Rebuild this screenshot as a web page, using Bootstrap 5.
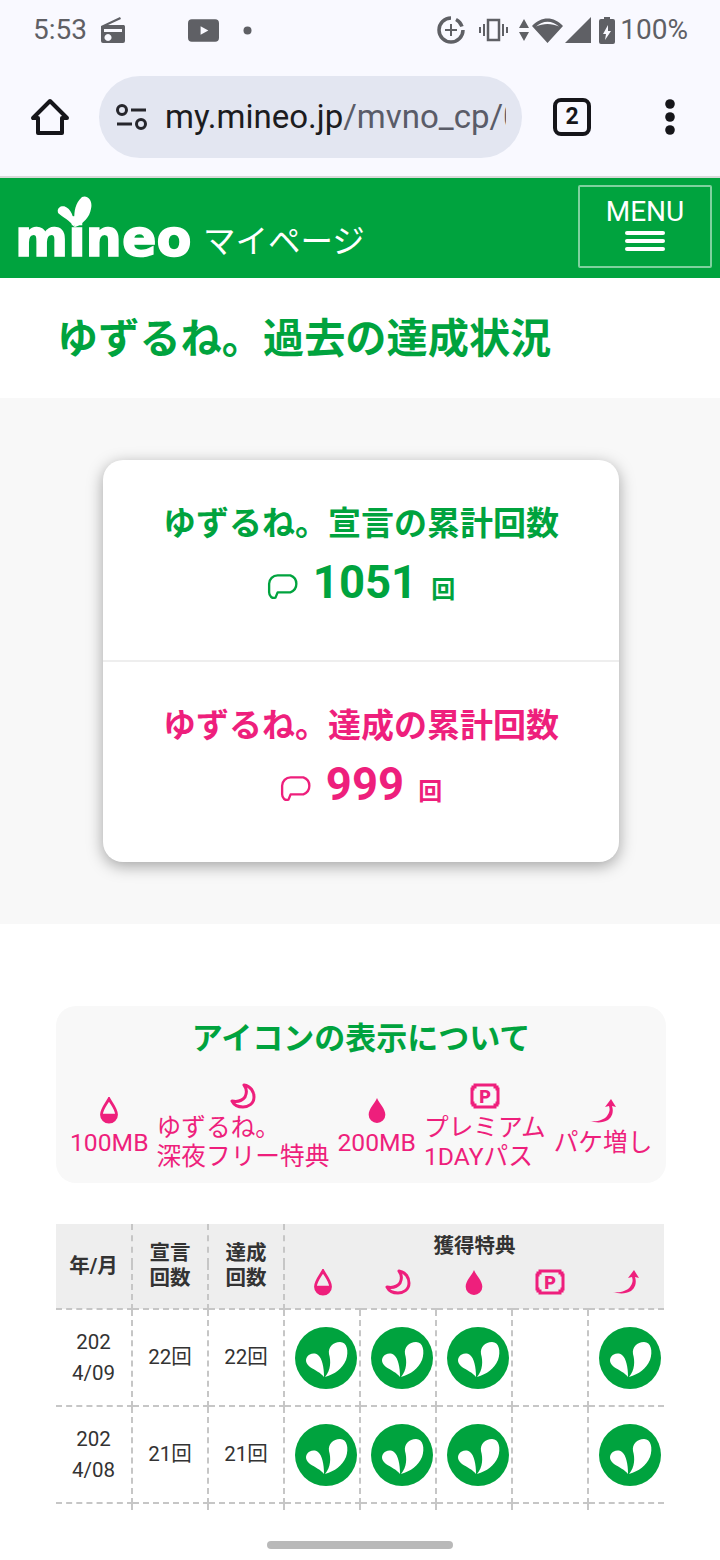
<!DOCTYPE html>
<html lang="ja">
<head>
    <meta charset="UTF-8">
    <meta name="viewport" content="width=device-width, initial-scale=1.0">
    <title>ゆずるね。過去の達成状況</title>
    <link href="https://cdn.jsdelivr.net/npm/bootstrap@5.3.2/dist/css/bootstrap.min.css" rel="stylesheet">
    <style>
        body {
            font-family: Roboto, "Noto Sans CJK JP", sans-serif;
            background-color: #fff;
            color: #333;
            overflow: hidden;
            height: 1560px;
        }

        /* phone chrome */
        .status-bar {
            height: 58px;
            background-color: #f9f9ff;
            color: #5f6065;
            font-size: 28px;
            padding: 2px 32px 0 33px;
        }

        .status-bar svg { display: block; fill: #5f6065; }

        .gap-2px { margin-left: 2px; }
        .gap-5px { margin-left: 5px; }
        .gap-8px { margin-left: 8px; }
        .gap-10px { margin-left: 10px; }
        .gap-13px { margin-left: 13px; }
        .gap-14px { margin-left: 14px; }
        .gap-24px { margin-left: 24px; }
        .gap-62px { margin-left: 62px; }
        .gap-73px { margin-left: 73px; }

        .browser-bar {
            height: 120px;
            background-color: #f9f9ff;
            border-bottom: 2px solid #d9d9d9;
            padding-left: 30px;
        }

        .url-pill {
            width: 423px;
            height: 82px;
            margin: 0 0 0 29px;
            background-color: #e3e6f1;
            border-radius: 41px;
            padding-left: 17px;
        }

        .url-text {
            width: 341px;
            margin-left: 17px;
            overflow: hidden;
            white-space: nowrap;
            font-size: 33px;
            line-height: 44px;
            color: #5a5c68;
        }

        .url-text b { font-weight: 400; color: #1c1c20; }

        .tab-count {
            width: 38px;
            height: 38px;
            margin-left: 31px;
            border: 4px solid #16161a;
            border-radius: 8px;
            font-size: 23px;
            font-weight: 700;
            line-height: 30px;
            text-align: center;
            color: #16161a;
        }

        /* site header */
        .site-head {
            height: 100px;
            background-color: #00a33e;
            padding: 0 8px 0 17px;
        }

        .logo-wrap { position: relative; width: 174px; height: 100px; }

        .logo-word {
            position: absolute;
            left: -2px;
            top: 31px;
            font-family: "DejaVu Sans", sans-serif;
            font-weight: 700;
            font-size: 51px;
            line-height: 60px;
            color: #fff;
            -webkit-text-stroke: 1.5px #fff;
        }

        .logo-leaf { position: absolute; left: 40px; top: 18px; }

        .logo-sub {
            margin: 27px 0 0 12px;
            font-size: 32.5px;
            font-weight: 400;
            color: #fff;
            line-height: 40px;
        }

        .menu-box {
            width: 134px;
            height: 83px;
            margin-bottom: 4px;
            border: 2px solid #7fd19e;
            border-radius: 2px;
            color: #fff;
            font-size: 28px;
            line-height: 32px;
            padding-top: 9px;
            text-align: center;
        }

        .menu-lines { width: 40px; height: 4px; margin: 3px auto 0; background: #fff; border-radius: 2px; }
        .menu-lines + .menu-lines { margin-top: 4px; }

        /* title */
        .page-title {
            height: 120px;
            margin: 0;
            padding-left: 57px;
            font-size: 41.2px;
            font-weight: 700;
            line-height: 122px;
            color: #00a33e;
        }

        .stats-band {
            height: 526px;
            padding: 62px 101px 0 103px;
            background-color: #f8f8f8;
        }

        .stats-box {
            height: 402px;
            background-color: #fff;
            border-radius: 20px;
            box-shadow: 0 4px 16px rgba(0, 0, 0, .35);
        }

        .stats-part { height: 200px; padding-top: 42px; text-align: center; }
        .stats-part + .stats-part { border-top: 2px solid #eee; padding-top: 42px; }

        .stats-label { font-size: 33px; font-weight: 700; line-height: 44px; }

        .stats-count {
            margin-top: 7px;
            font-size: 45.5px;
            font-weight: 700;
            line-height: 60px;
        }

        .stats-count svg { margin-right: 12px; vertical-align: -3px; }
        .stats-count small { margin-left: 14px; font-size: 24px; font-weight: 700; }

        .tone-green { color: #00a33e; }
        .tone-pink { color: #ee1f7c; }

        /* legend */
        .legend-box {
            width: 610px;
            height: 177px;
            margin: 82px 0 0 56px;
            padding-top: 12px;
            background-color: #f8f8f8;
            border-radius: 20px;
        }

        .legend-title {
            margin: 0;
            font-size: 31px;
            font-weight: 700;
            line-height: 42px;
            text-align: center;
            color: #00a33e;
        }

        .legend-items {
            gap: 8px;
            padding-left: 14px;
            height: 110px;
            margin-top: 12px;
            font-size: 24.7px;
            line-height: 29px;
            color: #ee1f7c;
            white-space: nowrap;
        }

        .legend-items svg { display: block; margin: 0 auto 4px; }

        /* table */
        .bonus-table {
            width: 608px;
            margin: 41px 0 0 56px;
            table-layout: fixed;
            border-collapse: collapse;
            font-size: 20.5px;
            color: #333;
            text-align: center;
        }

        .bonus-table col { width: 76px; }

        .bonus-table th, .bonus-table td {
            padding: 0;
            vertical-align: middle;
            border: 2px dashed #c6c6c6;
            border-top: 0;
        }

        .bonus-table tr > :first-child { border-left: 0; }
        .bonus-table tr > :last-child { border-right: 0; }

        .bonus-table th {
            background-color: #eee;
            font-weight: 700;
            line-height: 25px;
        }

        .bonus-table th svg { display: block; margin: 0 auto; }
        .bonus-table .head-top { height: 40px; padding-top: 4px; border-bottom: 0; border-right: 0; }
        .bonus-table .head-icon { height: 45px; border-left: 0; border-right: 0; padding-bottom: 8px; }
        .bonus-table tr.stamp-row { height: 97px; }
        .bonus-table tr.stamp-row td { line-height: 31px; }
        .bonus-table tr.stamp-row svg { display: block; margin-left: 10px; }
        .bonus-table tr.table-tail td { height: 7px; border-bottom: 0; }

        .gesture-pill {
            position: fixed;
            left: 267px;
            bottom: 11px;
            width: 186px;
            height: 8px;
            border-radius: 4px;
            background-color: #b9b9b9;
        }
    </style>
</head>
<body>

    <svg width="0" height="0" class="position-absolute">
        <symbol id="drop-half" viewBox="0 0 24 32">
            <path d="M12 2C9 8 3 14 3 21a9 9 0 0 0 18 0C21 14 15 8 12 2Z" fill="none" stroke="currentColor" stroke-width="3.4"/>
            <path d="M3 20h18v1a9 9 0 0 1-18 0Z" fill="currentColor"/>
        </symbol>
        <symbol id="drop-full" viewBox="0 0 24 32">
            <path d="M12 1C9 8 2 14 2 21a10 10 0 0 0 20 0C22 14 15 8 12 1Z" fill="currentColor"/>
        </symbol>
        <symbol id="moon" viewBox="0 0 26 26">
            <path d="M14 2C21 3 24 9 24 14C24 21 18 24 13 24C8 24 4 22 2 18C7 19 12 18 15 14C17 10 17 6 14 2Z" fill="none" stroke="currentColor" stroke-width="3" stroke-linejoin="round"/>
        </symbol>
        <symbol id="boost" viewBox="0 0 28 26">
            <path d="M1 23C8 24 15 22 18 18C21 14 21 11 20 8L16 9L22 1L27 9L23 8C25 14 23 19 19 22C14 25 7 25 1 23Z" fill="currentColor"/>
        </symbol>
        <symbol id="bubble" viewBox="0 0 32 26">
            <path d="M10 2H22A8.500 8.500 0 0 1 22 18H10L8 23C5 24 2 22 2 18V10A8 8 0 0 1 10 2Z" fill="none" stroke="currentColor" stroke-width="2.200" stroke-linejoin="round"/>
        </symbol>
        <symbol id="stamp" viewBox="0 0 62 62">
            <circle cx="31" cy="31" r="31" fill="#00a33e"/>
            <path d="M30 50C36 43 36 34 34 27C33 20 38 15 45 15C52 15 54 24 51 33C47 42 40 47 30 50Z" fill="#fff"/>
            <path d="M29 50C26 46 20 43 15 40C11 37 10 33 12 30C14 27 19 25 23 28C27 31 29 40 29 50Z" fill="#fff"/>
        </symbol>
    </svg>

    <!-- Status bar -->
    <div class="status-bar d-flex align-items-center">
        <span>5:53</span>
        <svg class="gap-13px" width="26" height="28" viewBox="0 0 26 28"><path d="M1 10 20 1l1 2L8 9h16a2 2 0 0 1 1 2v14a2 2 0 0 1-2 2H3a2 2 0 0 1-2-2Zm3 3v3h18v-3ZM8 18a3.500 3.500 0 1 0 .01 0Z" fill-rule="evenodd"/></svg>
        <svg class="gap-62px" width="31" height="23" viewBox="0 0 32 23"><path d="M4 0h24a4 4 0 0 1 4 4v15a4 4 0 0 1-4 4H4a4 4 0 0 1-4-4V4a4 4 0 0 1 4-4Zm9 7v9l8-4.500Z" fill-rule="evenodd"/></svg>
        <svg class="gap-24px" width="9" height="9" viewBox="0 0 9 9"><circle cx="4.500" cy="4.500" r="4"/></svg>
        <svg class="ms-auto" width="28" height="28" viewBox="0 0 28 28"><path d="M14 2a12 12 0 1 0 12 12" fill="none" stroke="#5f6065" stroke-width="3.500"/><path d="M19 3.500a12 12 0 0 1 6 7" fill="none" stroke="#5f6065" stroke-width="3.500"/><path d="M13 8h2v5h5v2h-5v5h-2v-5H8v-2h5Z"/></svg>
        <svg class="gap-14px" width="29" height="24" viewBox="0 0 29 24"><path d="M9 2h11v20H9Z" fill="none" stroke="#5f6065" stroke-width="2.500"/><path d="M4 6h2v12H4ZM0 9h2v6H0ZM23 6h2v12h-2ZM27 9h2v6h-2Z"/></svg>
        <svg class="gap-10px" width="12" height="22" viewBox="0 0 12 22"><path d="M6 0l5 9H1ZM6 22l-5-9h10Z"/></svg>
        <svg class="gap-2px" width="31" height="25" viewBox="0 0 31 25"><path d="M15.500 25 0 8C9-2 22-2 31 8ZM4 8.500C11 2 20 2 27 8.500 20 5 11 5 4 8.500Z" fill-rule="evenodd"/></svg>
        <svg class="gap-2px" width="26" height="26" viewBox="0 0 26 26"><path d="M26 0v26H0Z"/></svg>
        <svg class="gap-8px" width="16" height="27" viewBox="0 0 16 27"><path d="M5 0h6v2h3a2 2 0 0 1 2 2v21a2 2 0 0 1-2 2H2a2 2 0 0 1-2-2V4a2 2 0 0 1 2-2h3Zm4 8-5 9h3l-1 6 6-9H9Z" fill-rule="evenodd"/></svg>
        <span class="gap-5px">100%</span>
    </div>

    <!-- Browser toolbar -->
    <div class="browser-bar d-flex align-items-center">
        <svg width="40" height="38" viewBox="0 0 40 38"><path d="M20 3 3 20h5v15h24V20h5Z" fill="none" stroke="#16161a" stroke-width="4" stroke-linejoin="round"/></svg>
        <div class="url-pill d-flex align-items-center">
            <svg width="32" height="28" viewBox="0 0 32 28" fill="none" stroke="#26262c" stroke-width="3"><circle cx="6" cy="7" r="4.500"/><path d="M15 7h15M1 21h15"/><circle cx="25" cy="21" r="4.500"/></svg>
            <div class="url-text"><b>my.mineo.jp</b>/mvno_cp/0</div>
        </div>
        <div class="tab-count">2</div>
        <svg class="gap-73px" width="12" height="36" viewBox="0 0 12 36" fill="#16161a"><circle cx="6" cy="5" r="4.800"/><circle cx="6" cy="18" r="4.800"/><circle cx="6" cy="31" r="4.800"/></svg>
    </div>

    <!-- Header -->
    <header class="site-head d-flex align-items-center">
        <div class="logo-wrap">
            <span class="logo-word">mineo</span>
            <svg class="logo-leaf" width="35" height="32" viewBox="170 32 105 96" fill="#fff"><path d="M222 126C222 90 218 60 245 35C262 28 278 45 272 70C268 95 250 115 222 126Z"/><path d="M222 126C210 105 185 95 174 84C168 72 178 60 192 63C212 70 222 95 222 126Z"/></svg>
        </div>
        <div class="logo-sub">マイページ</div>
        <div class="menu-box ms-auto">MENU<div class="menu-lines"></div><div class="menu-lines"></div><div class="menu-lines"></div></div>
    </header>

    <h1 class="page-title">ゆずるね。過去の達成状況</h1>

    <section class="stats-band">
        <div class="stats-box">
            <div class="stats-part tone-green">
                <div class="stats-label">ゆずるね。宣言の累計回数</div>
                <div class="stats-count"><svg width="34" height="28"><use href="#bubble"/></svg>1051<small>回</small></div>
            </div>
            <div class="stats-part tone-pink">
                <div class="stats-label">ゆずるね。達成の累計回数</div>
                <div class="stats-count"><svg width="34" height="28"><use href="#bubble"/></svg>999<small>回</small></div>
            </div>
        </div>
    </section>

    <section class="legend-box">
        <h2 class="legend-title">アイコンの表示について</h2>
        <div class="legend-items d-flex align-items-center">
            <div><svg width="20" height="27"><use href="#drop-half"/></svg>100MB</div>
            <div><svg width="26" height="26"><use href="#moon"/></svg>ゆずるね。<br>深夜フリー特典</div>
            <div><svg width="20" height="27"><use href="#drop-full"/></svg>200MB</div>
            <div>
                <svg width="30" height="26" viewBox="0 0 30 26"><path d="M5 2H25V4H27V6H28V20H27V22H25V24H5V22H3V20H2V6H3V4H5Z" fill="none" stroke="currentColor" stroke-width="3"/><text x="15" y="19.500" text-anchor="middle" font-family="Roboto, sans-serif" font-size="18" font-weight="900" fill="currentColor">P</text></svg>
                プレミアム<br>1DAYパス
            </div>
            <div><svg width="28" height="26"><use href="#boost"/></svg>パケ増し</div>
        </div>
    </section>

    <table class="bonus-table">
        <colgroup><col><col><col><col><col><col><col><col></colgroup>
        <thead>
            <tr>
                <th rowspan="2">年/月</th>
                <th rowspan="2">宣言<br>回数</th>
                <th rowspan="2">達成<br>回数</th>
                <th colspan="5" class="head-top">獲得特典</th>
            </tr>
            <tr>
                <th class="head-icon tone-pink"><svg width="20" height="27"><use href="#drop-half"/></svg></th>
                <th class="head-icon tone-pink"><svg width="26" height="26"><use href="#moon"/></svg></th>
                <th class="head-icon tone-pink"><svg width="20" height="27"><use href="#drop-full"/></svg></th>
                <th class="head-icon tone-pink"><svg width="30" height="26" viewBox="0 0 30 26"><path d="M5 2H25V4H27V6H28V20H27V22H25V24H5V22H3V20H2V6H3V4H5Z" fill="none" stroke="currentColor" stroke-width="3"/><text x="15" y="19.500" text-anchor="middle" font-family="Roboto, sans-serif" font-size="18" font-weight="900" fill="currentColor">P</text></svg></th>
                <th class="head-icon tone-pink"><svg width="28" height="26"><use href="#boost"/></svg></th>
            </tr>
        </thead>
        <tbody>
            <tr class="stamp-row">
                <td>202<br>4/09</td>
                <td>22回</td>
                <td>22回</td>
                <td><svg width="62" height="62"><use href="#stamp"/></svg></td>
                <td><svg width="62" height="62"><use href="#stamp"/></svg></td>
                <td><svg width="62" height="62"><use href="#stamp"/></svg></td>
                <td></td>
                <td><svg width="62" height="62"><use href="#stamp"/></svg></td>
            </tr>
            <tr class="stamp-row">
                <td>202<br>4/08</td>
                <td>21回</td>
                <td>21回</td>
                <td><svg width="62" height="62"><use href="#stamp"/></svg></td>
                <td><svg width="62" height="62"><use href="#stamp"/></svg></td>
                <td><svg width="62" height="62"><use href="#stamp"/></svg></td>
                <td></td>
                <td><svg width="62" height="62"><use href="#stamp"/></svg></td>
            </tr>
            <tr class="table-tail">
                <td></td><td></td><td></td><td></td><td></td><td></td><td></td><td></td>
            </tr>
        </tbody>
    </table>

    <div class="gesture-pill"></div>

    <script src="https://cdn.jsdelivr.net/npm/bootstrap@5.3.2/dist/js/bootstrap.bundle.min.js"></script>
</body>
</html>
